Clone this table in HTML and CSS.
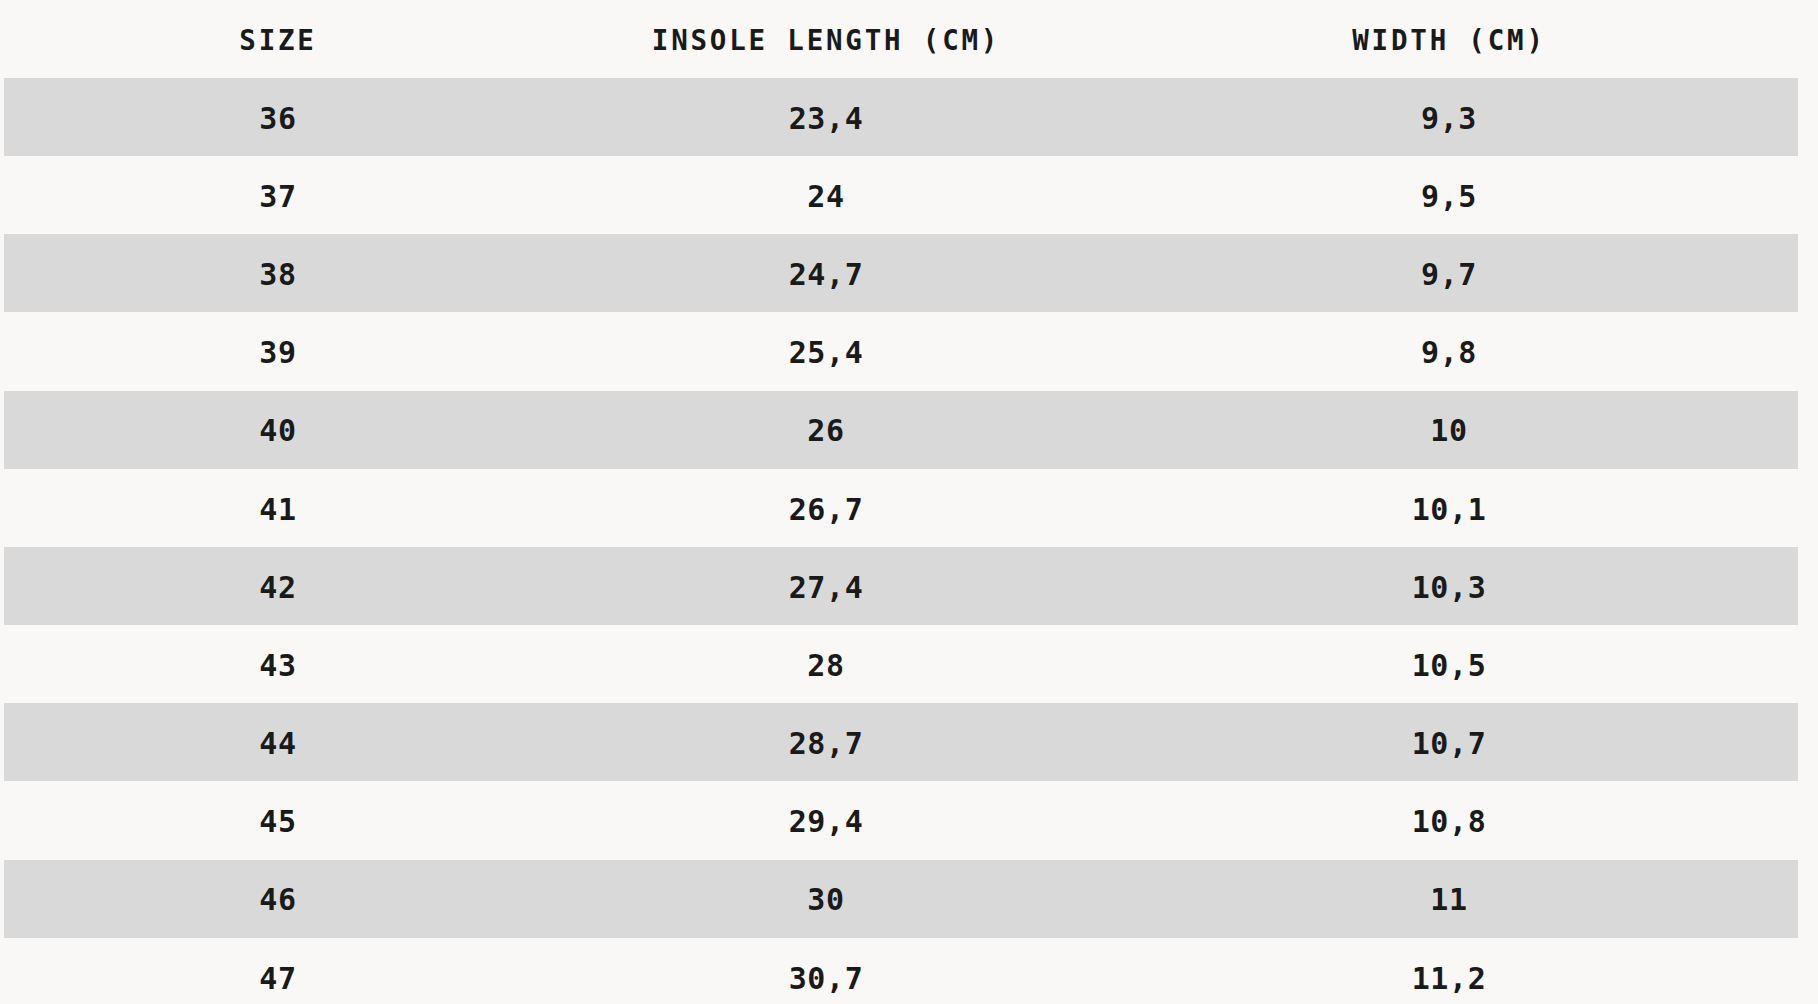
FILE: index.html
```html
<!DOCTYPE html>
<html lang="en">
<head>
<meta charset="utf-8">
<title>Size guide</title>
<link rel="stylesheet" href="styles.css">
</head>
<body>
<div class="wrap">
<table class="size-table">
  <colgroup>
    <col class="c1"><col class="c2"><col class="c3">
  </colgroup>
  <thead>
    <tr><th>SIZE</th><th>INSOLE LENGTH (CM)</th><th>WIDTH (CM)</th></tr>
  </thead>
  <tbody>
    <tr><td>36</td><td>23,4</td><td>9,3</td></tr>
    <tr><td>37</td><td>24</td><td>9,5</td></tr>
    <tr><td>38</td><td>24,7</td><td>9,7</td></tr>
    <tr><td>39</td><td>25,4</td><td>9,8</td></tr>
    <tr><td>40</td><td>26</td><td>10</td></tr>
    <tr><td>41</td><td>26,7</td><td>10,1</td></tr>
    <tr><td>42</td><td>27,4</td><td>10,3</td></tr>
    <tr><td>43</td><td>28</td><td>10,5</td></tr>
    <tr><td>44</td><td>28,7</td><td>10,7</td></tr>
    <tr><td>45</td><td>29,4</td><td>10,8</td></tr>
    <tr><td>46</td><td>30</td><td>11</td></tr>
    <tr><td>47</td><td>30,7</td><td>11,2</td></tr>
  </tbody>
</table>
</div>
</body>
</html>
```

FILE: styles.css
```css
html, body {
  margin: 0;
  padding: 0;
  background: #f9f8f6;
}
body {
  font-family: "DejaVu Sans Mono", "Liberation Mono", monospace;
  color: #1a1a1a;
}
.wrap {
  padding: 0 20px 0 4px;
}
.size-table {
  width: 1794px;
  border-collapse: collapse;
  table-layout: fixed;
}
.c1 { width: 548px; }
.c2 { width: 548px; }
.c3 { width: 698px; }
.size-table th,
.size-table td {
  padding: 2.4px 0 0 0;
  text-align: center;
  vertical-align: middle;
  font-weight: bold;
}
.size-table th {
  height: 75.4px;
  font-size: 27.5px;
  letter-spacing: 2.8px;
}
.size-table td {
  height: 75.8px;
  font-size: 30px;
  letter-spacing: 0.6px;
}
.size-table tbody tr:nth-child(odd) {
  background: #d9d9d9;
}
```
